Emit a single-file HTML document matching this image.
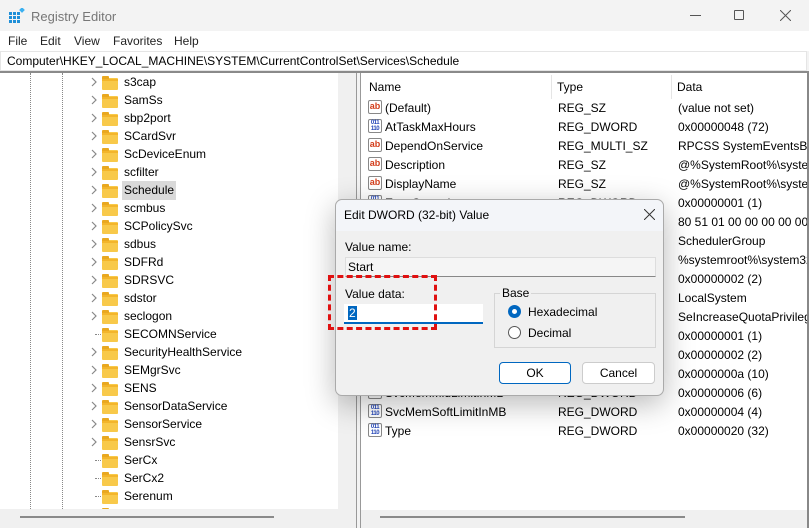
<!DOCTYPE html>
<html><head><meta charset="utf-8"><style>
*{margin:0;padding:0;box-sizing:border-box}
body{width:809px;height:528px;overflow:hidden;background:#f3f3f3;font-family:"Liberation Sans",sans-serif;font-size:12px;color:#000;position:relative}
.a{position:absolute;white-space:nowrap}
.fold{position:absolute;width:16px;height:12px;background:#f8c94a;border-radius:1px}
.fold:before{content:"";position:absolute;left:0;top:-2px;width:7px;height:3px;background:#e9a820;border-radius:1px 1px 0 0}
.fold:after{content:"";position:absolute;left:0;top:1px;width:16px;height:2px;background:#f3b52b}
.ico{position:absolute;width:14px;height:14px;border:1px solid #888;border-radius:2px;background:#fff;font-size:9px;font-weight:bold;line-height:11px;text-align:center}
.ab{color:#d33d1a}
.bin{color:#2446b8;font-size:6px;line-height:6px;letter-spacing:-0.5px}
</style></head><body>
<div class="a" style="left:9px;top:8px;width:16px;height:16px">
<svg width="16" height="16"><g fill="#1f8fd8"><rect x="0" y="4" width="3" height="3"/><rect x="4" y="4" width="3" height="3"/><rect x="8" y="4" width="3" height="3"/><rect x="0" y="8" width="3" height="3"/><rect x="4" y="8" width="3" height="3"/><rect x="8" y="8" width="3" height="3"/><rect x="0" y="12" width="3" height="3"/><rect x="4" y="12" width="3" height="3"/><rect x="8" y="12" width="3" height="3"/></g><rect x="11" y="0" width="4" height="4" fill="#3ab0f0" transform="rotate(45 13 2)"/></svg></div>
<div class="a" style="left:31px;top:9px;font-size:13px;color:#777">Registry Editor</div>
<div class="a" style="left:690px;top:15px;width:11px;height:1px;background:#555"></div>
<div class="a" style="left:734px;top:10px;width:10px;height:10px;border:1px solid #555;border-radius:1px"></div>
<svg class="a" style="left:780px;top:10px" width="11" height="11"><path d="M0 0L11 11M11 0L0 11" stroke="#555" stroke-width="1"/></svg>
<div class="a" style="left:0;top:31px;width:809px;height:20px;background:#fff"></div>
<div class="a" style="left:8px;top:34px;color:#222">File</div>
<div class="a" style="left:40px;top:34px;color:#222">Edit</div>
<div class="a" style="left:74px;top:34px;color:#222">View</div>
<div class="a" style="left:113px;top:34px;color:#222">Favorites</div>
<div class="a" style="left:174px;top:34px;color:#222">Help</div>
<div class="a" style="left:0;top:51px;width:807px;height:20px;background:#fff;border:1px solid #e5e5e5"></div>
<div class="a" style="left:7px;top:54px">Computer\HKEY_LOCAL_MACHINE\SYSTEM\CurrentControlSet\Services\Schedule</div>
<div class="a" style="left:0;top:71px;width:809px;height:2px;background:#8a8a8a"></div>
<div class="a" style="left:0;top:73px;width:357px;height:455px;background:#fff;border-right:1px solid #999;overflow:hidden">
<div class="a" style="left:30px;top:0;height:440px;border-left:1px dotted #888"></div>
<div class="a" style="left:62px;top:0;height:440px;border-left:1px dotted #888"></div>
<div class="a" style="left:122px;top:108px;width:54px;height:19px;background:#d9d9d9"></div>
<div id="tree"></div>
<div class="a" style="left:0;top:436px;width:340px;height:19px;background:#f0f0f0"></div>
<div class="a" style="left:20px;top:443px;width:254px;height:2px;background:#8a8a8a"></div>
<div class="a" style="left:338px;top:0;width:18px;height:455px;background:#f0f0f0"></div>
</div>
<div class="a" style="left:360px;top:73px;width:449px;height:455px;background:#fff;border-left:1px solid #999;overflow:hidden">
<div class="a" style="left:190px;top:2px;height:24px;border-left:1px solid #e5e5e5"></div>
<div class="a" style="left:310px;top:2px;height:24px;border-left:1px solid #e5e5e5"></div>
<div class="a" style="left:8px;top:7px">Name</div>
<div class="a" style="left:196px;top:7px">Type</div>
<div class="a" style="left:316px;top:7px">Data</div>
<div id="rows"></div>
<div class="a" style="left:0;top:437px;width:449px;height:18px;background:#f0f0f0"></div>
<div class="a" style="left:19px;top:443px;width:305px;height:2px;background:#8a8a8a"></div>
<div class="a" style="left:446px;top:0;width:3px;height:455px;background:#888"></div>
</div>
<div class="a" style="left:335px;top:199px;width:329px;height:197px;background:#f0f0f0;border:1px solid #aaa;border-radius:7px;box-shadow:0 8px 30px rgba(0,0,0,.28)">
<div class="a" style="left:0;top:0;width:327px;height:31px;background:#f3f5f9;border-radius:7px 7px 0 0"></div>
<div class="a" style="left:8px;top:8px;font-size:12px">Edit DWORD (32-bit) Value</div>
<svg class="a" style="left:308px;top:9px" width="11" height="11"><path d="M0 0L11 11M11 0L0 11" stroke="#333" stroke-width="1"/></svg>
<div class="a" style="left:9px;top:40px">Value name:</div>
<div class="a" style="left:9px;top:57px;width:311px;height:20px;background:#f5f5f5;border:1px solid #ddd;border-bottom:1px solid #888"></div>
<div class="a" style="left:12px;top:60px">Start</div>
<div class="a" style="left:9px;top:87px">Value data:</div>
<div class="a" style="left:8px;top:104px;width:139px;height:20px;background:#fff;border-bottom:2px solid #0067c0"></div>
<div class="a" style="left:12px;top:106px;background:#0067c0;color:#fff;padding:0 1px">2</div>
<div class="a" style="left:158px;top:93px;width:162px;height:55px;border:1px solid #d5d5d5"></div>
<div class="a" style="left:164px;top:86px;background:#f0f0f0;padding:0 2px">Base</div>
<div class="a" style="left:172px;top:105px;width:13px;height:13px;border-radius:50%;background:#0067c0"></div>
<div class="a" style="left:176px;top:109px;width:5px;height:5px;border-radius:50%;background:#fff"></div>
<div class="a" style="left:192px;top:105px">Hexadecimal</div>
<div class="a" style="left:172px;top:126px;width:13px;height:13px;border-radius:50%;border:1px solid #555;background:#fff"></div>
<div class="a" style="left:192px;top:126px">Decimal</div>
<div class="a" style="left:163px;top:162px;width:72px;height:22px;background:#fff;border:1px solid #0067c0;border-radius:4px;text-align:center;line-height:20px">OK</div>
<div class="a" style="left:246px;top:162px;width:73px;height:22px;background:#fff;border:1px solid #ccc;border-radius:4px;text-align:center;line-height:20px">Cancel</div>
</div>
<div class="a" style="left:328px;top:275px;width:109px;height:55px;border:3px dashed #e01010"></div>
<script>
var t=[["s3cap",1],["SamSs",1],["sbp2port",1],["SCardSvr",1],["ScDeviceEnum",1],["scfilter",1],["Schedule",1],["scmbus",1],["SCPolicySvc",1],["sdbus",1],["SDFRd",1],["SDRSVC",1],["sdstor",1],["seclogon",1],["SECOMNService",0],["SecurityHealthService",1],["SEMgrSvc",1],["SENS",1],["SensorDataService",1],["SensorService",1],["SensrSvc",1],["SerCx",0],["SerCx2",0],["Serenum",0],["Serial",0]];
var h="";t.forEach(function(r,i){var y=i*18;
if(r[1])h+='<svg class="a" style="left:91px;top:'+(y+4)+'px" width="6" height="10"><path d="M1 1L5 5L1 9" fill="none" stroke="#888" stroke-width="1.2"/></svg>';else h+='<div class="a" style="left:95px;top:'+(y+9)+'px;width:6px;border-top:1px dotted #888"></div>';
h+='<div class="fold" style="left:102px;top:'+(y+5)+'px"></div><div class="a" style="left:124px;top:'+(y+2)+'px">'+r[0]+'</div>';});
document.getElementById("tree").innerHTML=h;
var R=[["(Default)","REG_SZ","(value not set)",1],["AtTaskMaxHours","REG_DWORD","0x00000048 (72)",0],["DependOnService","REG_MULTI_SZ","RPCSS SystemEventsBroker",1],["Description","REG_SZ","@%SystemRoot%\\system32",1],["DisplayName","REG_SZ","@%SystemRoot%\\system32",1],["ErrorControl","REG_DWORD","0x00000001 (1)",0],["FailureActions","REG_BINARY","80 51 01 00 00 00 00 00 00",0],["Group","REG_SZ","SchedulerGroup",1],["ImagePath","REG_EXPAND_SZ","%systemroot%\\system32\\svchost",1],["LaunchProtected","REG_DWORD","0x00000002 (2)",0],["ObjectName","REG_SZ","LocalSystem",1],["RequiredPrivileges","REG_MULTI_SZ","SeIncreaseQuotaPrivilege",1],["ServiceSidType","REG_DWORD","0x00000001 (1)",0],["Start","REG_DWORD","0x00000002 (2)",0],["SvcMemHardLimitInMB","REG_DWORD","0x0000000a (10)",0],["SvcMemMidLimitInMB","REG_DWORD","0x00000006 (6)",0],["SvcMemSoftLimitInMB","REG_DWORD","0x00000004 (4)",0],["Type","REG_DWORD","0x00000020 (32)",0]];
h="";R.forEach(function(r,i){var y=27+i*19;
h+=r[3]?'<div class="ico ab" style="left:7px;top:'+y+'px">ab</div>':'<div class="ico bin" style="left:7px;top:'+y+'px">011<br>110</div>';
h+='<div class="a" style="left:24px;top:'+(y+1)+'px">'+r[0]+'</div><div class="a" style="left:197px;top:'+(y+1)+'px">'+r[1]+'</div><div class="a" style="left:317px;top:'+(y+1)+'px">'+r[2]+'</div>';});
document.getElementById("rows").innerHTML=h;
</script>
</body></html>
